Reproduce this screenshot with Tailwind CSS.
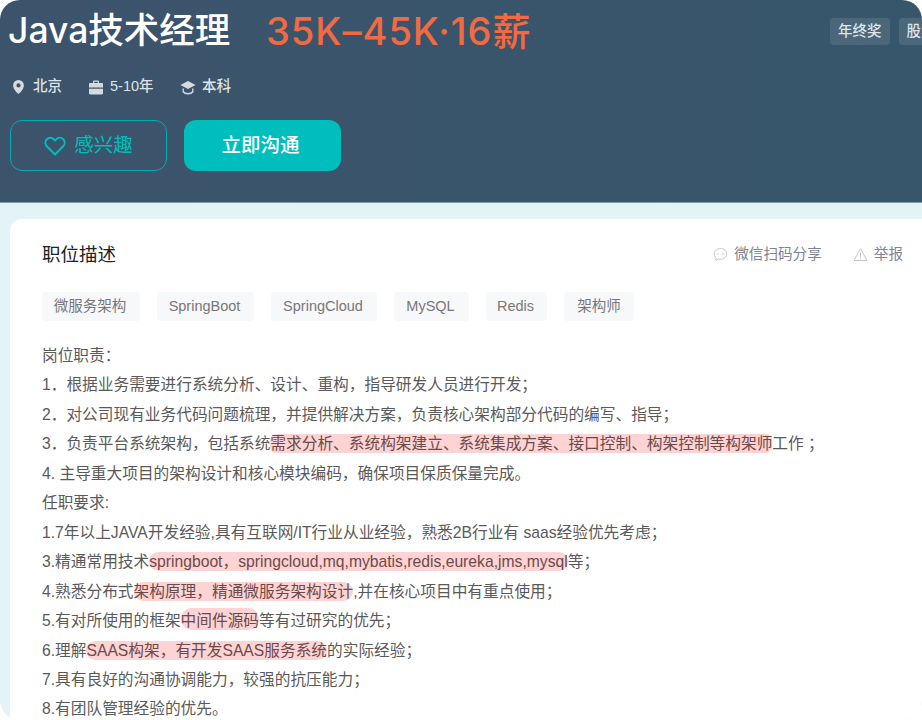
<!DOCTYPE html>
<html lang="zh-CN">
<head>
    <meta charset="UTF-8">
    <script src="https://cdn.jsdelivr.net/npm/@tailwindcss/browser@4"></script>
    <title>Java技术经理</title>
</head>
<body class="bg-white">
    <div class="w-[922px] h-[720px] overflow-hidden rounded-[20px] bg-[#e4f3f6] font-['Liberation_Sans','Noto_Sans_CJK_SC',sans-serif]">
        <!-- 职位头部 -->
        <header class="h-[203px] bg-gradient-to-r from-[#3c546b] to-[#37566b] border-b border-[#7d9aa8] pl-[10px] pt-[8px]">
            <div class="flex items-start justify-between h-[46px]">
                <div class="flex items-center h-[46px] -ml-[2px] font-['Inter','Noto_Sans_CJK_SC',sans-serif] font-medium whitespace-nowrap">
                    <h1 class="text-white text-[35.5px] w-[258px]">Java技术经理</h1>
                    <span class="text-[#f26a41] text-[38px] tracking-[1px]">35K–45K·16薪</span>
                </div>
                <div class="flex gap-[9px] mt-[10px] shrink-0 w-[92px] overflow-hidden text-[14.5px] font-medium text-[#dfe4e8]">
                    <span class="shrink-0 h-[27px] px-[8px] flex items-center rounded bg-white/10">年终奖</span>
                    <span class="shrink-0 h-[27px] px-[8px] flex items-center rounded bg-white/10">股票</span>
                </div>
            </div>
            <div class="flex items-center h-[28px] mt-[19px] pl-[2px] text-[14.5px] font-medium text-[#dfe3e7]">
                <svg class="w-[13px] h-[16px] mr-[8px]" viewBox="0 0 13 16"><path fill="#d5dade" fill-rule="evenodd" d="M6.5 1a5.4 5.4 0 0 0-5.4 5.4c0 3.6 4.1 7.6 5.4 8.6 1.3-1 5.4-5 5.4-8.6A5.4 5.4 0 0 0 6.5 1Zm0 3.3a2.1 2.1 0 1 1 0 4.2 2.1 2.1 0 0 1 0-4.2Z"/></svg>
                <span class="w-[55px]">北京</span>
                <svg class="w-[16px] h-[15px] mr-[6px]" viewBox="0 0 16 15"><path fill="#d5dade" fill-rule="evenodd" d="M5 3V1.6C5 .8 5.6.4 6.2.4h3.6c.6 0 1.2.4 1.2 1.2V3h2.8c.7 0 1.2.5 1.2 1.2v9c0 .7-.5 1.2-1.2 1.2H2.2c-.7 0-1.2-.5-1.2-1.2v-9C1 3.5 1.5 3 2.2 3H5Zm1.3-1.3V3h3.4V1.7H6.3ZM1 7.5v1.2h14V7.5H1Z"/></svg>
                <span class="w-[70px]">5-10年</span>
                <svg class="w-[16px] h-[15px] mr-[6px]" viewBox="0 0 16 15"><path fill="#d5dade" d="M8 1 .4 5 8 9l7.6-4L8 1Z"/><path fill="none" stroke="#d5dade" stroke-width="1.4" d="M3.2 8.5v3.2C4.2 13 6 13.7 8 13.7s3.8-.7 4.8-2V8.5"/></svg>
                <span>本科</span>
            </div>
            <div class="flex gap-[17px] mt-[19px]">
                <button class="w-[157px] h-[51px] flex items-center justify-center gap-[8px] rounded-xl border border-[#00aeb3] text-[#00bebd] text-[19.5px]">
                    <svg class="w-[22px] h-[20px]" viewBox="0 0 22 20" fill="none"><path stroke="#00bebd" stroke-width="2" stroke-linejoin="round" d="M11 18.5 2.8 10.2a5 5 0 0 1 0-7c1.9-1.9 5-1.9 6.9 0L11 4.5l1.3-1.3c1.9-1.9 5-1.9 6.9 0a5 5 0 0 1 0 7L11 18.5Z"/></svg>
                    感兴趣
                </button>
                <button class="w-[157px] h-[51px] pr-[4px] rounded-xl bg-[#00bebd] text-white font-medium text-[19.5px]">立即沟通</button>
            </div>
        </header>

        <!-- 职位描述 -->
        <main class="ml-[10px] mt-[16px] h-[540px] rounded-tl-xl bg-white pl-[32px] pt-[20px] text-[#5a5a5a]">
            <div class="flex items-center justify-between h-[32px] pr-[19px]">
                <h2 class="text-[18.5px] text-[#222]">职位描述</h2>
                <div class="flex items-center text-[14.6px] text-[#7d8494]">
                    <svg class="w-[15px] h-[15px] mr-[6px]" viewBox="0 0 15 15" fill="none"><path stroke="#c4c7cc" d="M7.5 1.5c3.4 0 6.2 2.4 6.2 5.4s-2.8 5.4-6.2 5.4c-.8 0-1.5-.1-2.2-.3L2.8 13.5l.3-2.4C2 10.2 1.3 8.6 1.3 6.9c0-3 2.8-5.4 6.2-5.4Z"/><circle cx="5" cy="7" r=".8" fill="#c4c7cc"/><circle cx="10" cy="7" r=".8" fill="#c4c7cc"/></svg>
                    <span>微信扫码分享</span>
                    <svg class="w-[15px] h-[15px] ml-[31px] mr-[6px]" viewBox="0 0 15 15" fill="none"><path stroke="#c4c7cc" stroke-linejoin="round" d="M7.5 1.5 14 13.5H1L7.5 1.5Z"/><path stroke="#c4c7cc" d="M7.5 5.5V10M7.5 11v1"/></svg>
                    <span>举报</span>
                </div>
            </div>
            <ul class="flex gap-[17px] mt-[21px] text-[14.5px] text-[#777]">
                <li class="h-[29px] w-[98px] pr-[2px] flex items-center justify-center rounded bg-[#f7f8fa]">微服务架构</li>
                <li class="h-[29px] w-[97px] pr-[2px] flex items-center justify-center rounded bg-[#f7f8fa]">SpringBoot</li>
                <li class="h-[29px] w-[106px] pr-[2px] flex items-center justify-center rounded bg-[#f7f8fa]">SpringCloud</li>
                <li class="h-[29px] w-[75px] pr-[2px] flex items-center justify-center rounded bg-[#f7f8fa]">MySQL</li>
                <li class="h-[29px] w-[61px] pr-[2px] flex items-center justify-center rounded bg-[#f7f8fa]">Redis</li>
                <li class="h-[29px] w-[70px] flex items-center justify-center rounded bg-[#f7f8fa]">架构师</li>
            </ul>
            <div class="mt-[20px] text-[15.7px] leading-[29.45px] whitespace-nowrap">
                <p>岗位职责：</p>
                <p>1．根据业务需要进行系统分析、设计、重构，指导研发人员进行开发；</p>
                <p>2．对公司现有业务代码问题梳理，并提供解决方案，负责核心架构部分代码的编写、指导；</p>
                <p>3．负责平台系统架构，包括系统<span class="bg-[#fdd3d3] text-[#6d4a4a] rounded-md py-[1px]">需求分析、系统构架建立、系统集成方案、接口控制、构架控制等构架师</span>工作 ；</p>
                <p>4. 主导重大项目的架构设计和核心模块编码，确保项目保质保量完成。</p>
                <p>任职要求:</p>
                <p>1.7年以上JAVA开发经验,具有互联网/IT行业从业经验，熟悉2B行业有 saas经验优先考虑；</p>
                <p>3.精通常用技术<span class="bg-[#fdd3d3] text-[#6d4a4a] rounded-full py-[1px]">springboot，springcloud,mq,mybatis,redis,eureka,jms,mysql</span>等；</p>
                <p>4.熟悉分布式<span class="bg-[#fdd3d3] text-[#6d4a4a] rounded-full py-[1px]">架构原理，精通微服务架构设计</span>,并在核心项目中有重点使用；</p>
                <p>5.有对所使用的框架<span class="bg-[#fdd3d3] text-[#6d4a4a] rounded-full pt-[4px] pb-[1px]">中间件源码</span>等有过研究的优先；</p>
                <p>6.理解<span class="bg-[#fdd3d3] text-[#6d4a4a] rounded-full py-[1px]">SAAS构架，有开发SAAS服务系统</span>的实际经验；</p>
                <p>7.具有良好的沟通协调能力，较强的抗压能力；</p>
                <p>8.有团队管理经验的优先。</p>
            </div>
        </main>
    </div>
</body>
</html>
